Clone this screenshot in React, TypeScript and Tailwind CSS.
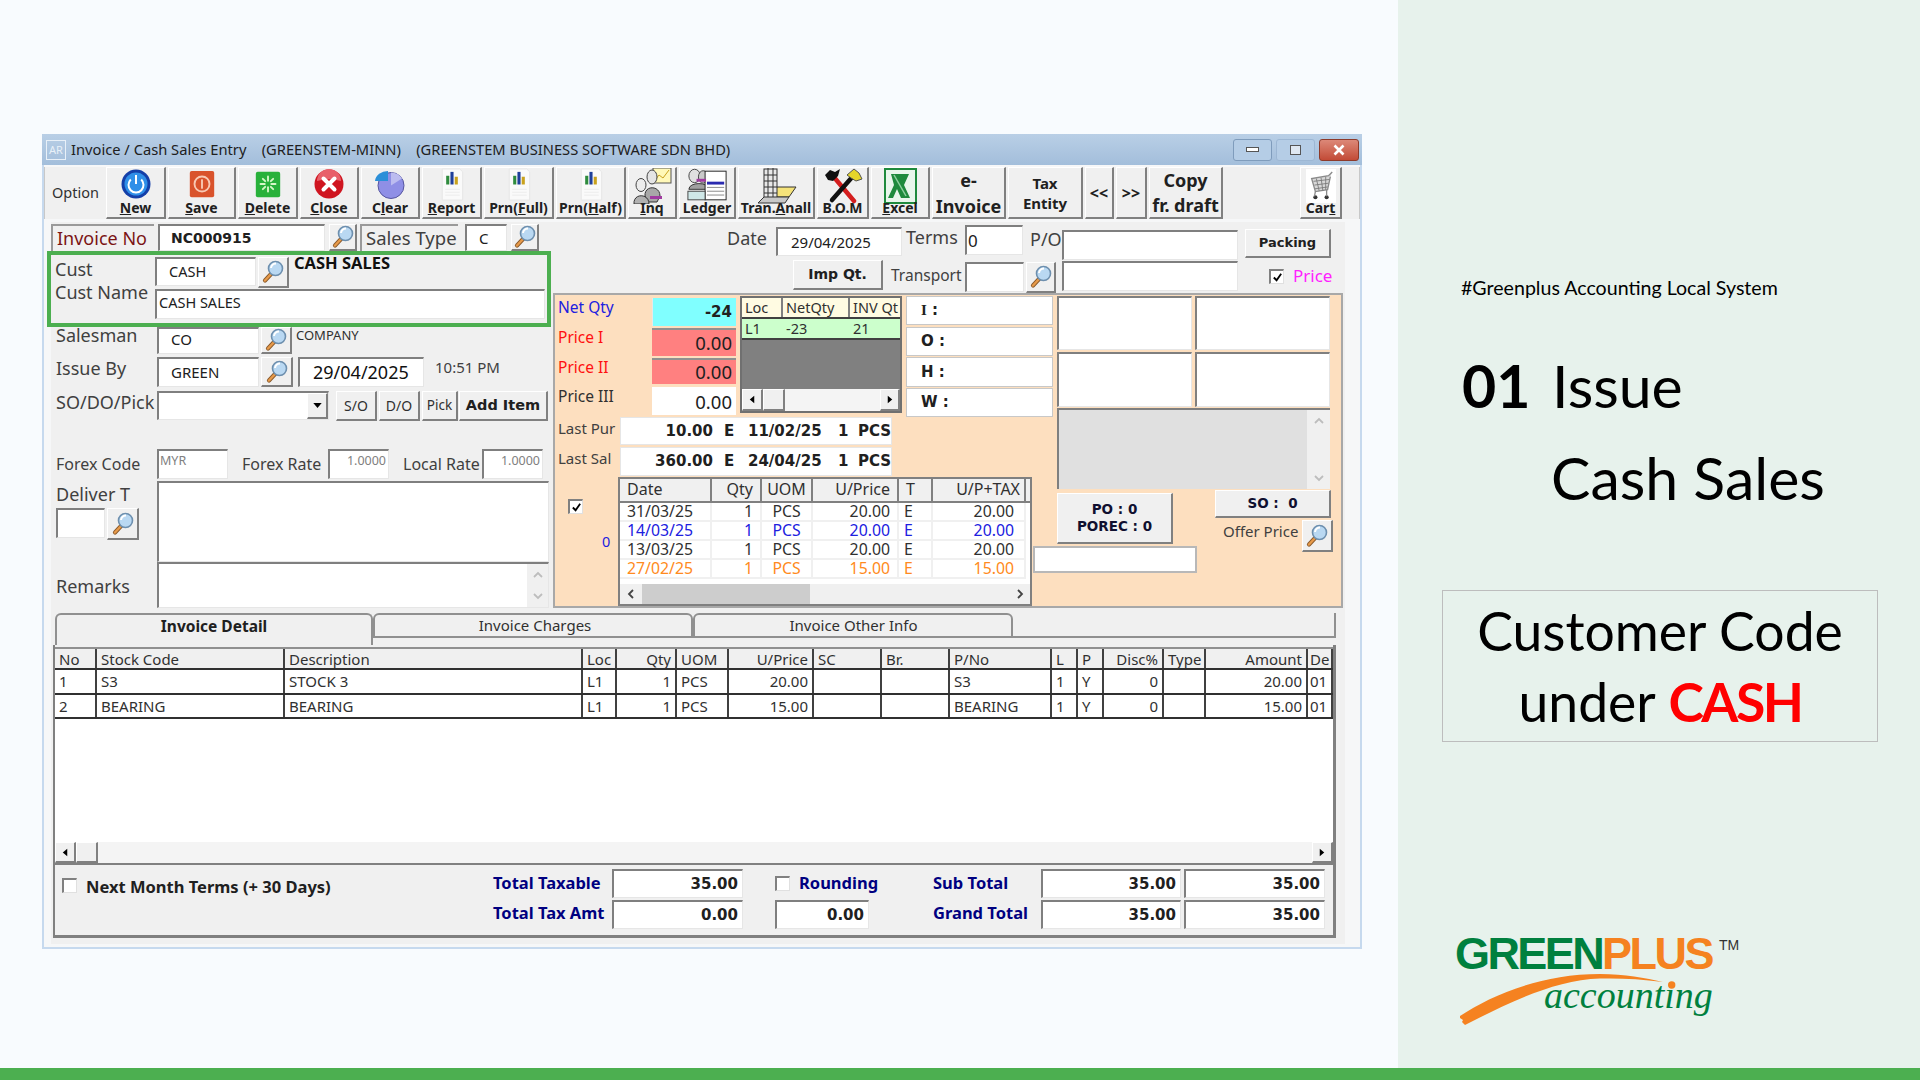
import React from "react";

const sunk = "bg-white border-t-2 border-l-2 border-t-[#7f7f7f] border-l-[#7f7f7f] border-r border-b border-r-[#e6e6e6] border-b-[#e6e6e6]";
const raised = "bg-[#f0f0f0] border-t border-l border-t-white border-l-white border-r-2 border-b-2 border-r-[#808080] border-b-[#808080]";
const dv = "font-['DejaVu_Sans',sans-serif] font-bold";
const lbl = "text-[#404040] whitespace-nowrap";
const blueB = "text-[#000080] font-bold text-[16.5px] whitespace-nowrap";

function MagIcon() {
  return (
    <svg viewBox="0 0 24 24" className="w-[24px] h-[24px]">
      <path d="M10.5 13.5 L4 20.5" stroke="#8a5a2b" strokeWidth="4.2" strokeLinecap="round" />
      <path d="M10.5 13.5 L4 20.5" stroke="#e79a4a" strokeWidth="2.4" strokeLinecap="round" />
      <circle cx="14.5" cy="8.5" r="7" fill="#b9d8f2" stroke="#6d8fae" strokeWidth="1.6" />
      <path d="M10 8 A5 5 0 0 1 15 3.6" fill="none" stroke="#ffffff" strokeWidth="2" />
    </svg>
  );
}

function Mag({ className }: { className: string }) {
  return (
    <div className={`${raised} ${className} flex items-center justify-center shrink-0`}>
      <MagIcon />
    </div>
  );
}

const icons: Record<string, React.ReactNode> = {
  new: (
    <svg viewBox="0 0 32 32" className="w-[32px] h-[32px]">
      <circle cx="16" cy="16" r="14.5" fill="#143fa8" />
      <circle cx="16" cy="16" r="11.5" fill="#2f8fe8" />
      <path d="M10.8 11.5 A7.5 7.5 0 1 0 21.2 11.5" fill="none" stroke="#fff" strokeWidth="2" />
      <path d="M16 7 V16" stroke="#fff" strokeWidth="2" />
    </svg>
  ),
  save: (
    <svg viewBox="0 0 32 32" className="w-[30px] h-[32px]">
      <rect x="3" y="2" width="26" height="28" rx="2" fill="#d9532c" />
      <circle cx="16" cy="16" r="8" fill="none" stroke="#f8c9b4" strokeWidth="2" />
      <rect x="15" y="11" width="2" height="10" fill="#f8c9b4" />
    </svg>
  ),
  delete: (
    <svg viewBox="0 0 32 32" className="w-[30px] h-[32px]">
      <rect x="3" y="3" width="26" height="27" rx="2" fill="#28b13a" />
      <g stroke="#d8f7c8" strokeWidth="2" strokeLinecap="round">
        <path d="M16 8 V12.5" /><path d="M16 19.5 V24" /><path d="M8 16 H12.5" /><path d="M19.5 16 H24" />
        <path d="M10.5 10.5 L13 13" /><path d="M19 19 L21.5 21.5" /><path d="M21.5 10.5 L19 13" /><path d="M13 19 L10.5 21.5" />
      </g>
    </svg>
  ),
  close: (
    <svg viewBox="0 0 32 32" className="w-[32px] h-[32px]">
      <circle cx="16" cy="16" r="14.5" fill="#cf1520" />
      <path d="M4 13 A12 12 0 0 1 28 13 A20 8 0 0 0 4 13" fill="#e8606a" />
      <path d="M10.5 10.5 L21.5 21.5 M21.5 10.5 L10.5 21.5" stroke="#fff" strokeWidth="4" strokeLinecap="round" />
    </svg>
  ),
  clear: (
    <svg viewBox="0 0 32 32" className="w-[32px] h-[32px]">
      <circle cx="17" cy="17.5" r="13" fill="#8f8fe6" stroke="#55559f" strokeWidth="1" />
      <path d="M17 17.5 L17 4.5 A13 13 0 0 1 28 10.5 Z" fill="#bcbcf0" />
      <path d="M14 13 L1 13 A13 11 0 0 1 14 3 Z" fill="#2b8fd8" />
    </svg>
  ),
  chart: (
    <svg viewBox="0 0 28 34" className="w-[28px] h-[33px]">
      <path d="M4 1 H22 L25 4 V33 H4 Z" fill="#fafafa" stroke="#e6e6e6" />
      <rect x="8" y="8" width="3.2" height="9" fill="#2e8b3d" />
      <rect x="12.4" y="4" width="3.2" height="13" fill="#1f3f9a" />
      <rect x="16.8" y="9" width="3.2" height="8" fill="#c9a21e" />
      <path d="M7 22 H22 M7 25 H22 M7 28 H22" stroke="#ececec" />
    </svg>
  ),
  inq: (
    <svg viewBox="0 0 42 36" className="w-[42px] h-[36px]">
      <rect x="22" y="0" width="18" height="15" fill="#fff8b8" stroke="#555" />
      <path d="M24 12 L28 7 L32 10 L38 2" stroke="#c9a21e" fill="none" />
      <ellipse cx="21" cy="9" rx="5" ry="7" fill="#e4e4e4" stroke="#444" />
      <path d="M14 28 C13 17 29 17 29 28 L26 34 H17 Z" fill="#a8a8a8" stroke="#333" />
      <ellipse cx="10" cy="17" rx="5" ry="6.5" fill="#ececec" stroke="#444" />
      <path d="M3 36 C2 25 18 25 18 36 Z" fill="#b0b0b0" stroke="#333" />
      <rect x="19" y="28" width="12" height="3" fill="#a03ca0" />
    </svg>
  ),
  ledger: (
    <svg viewBox="0 0 44 36" className="w-[42px] h-[35px]">
      <ellipse cx="9" cy="8" rx="6" ry="7" fill="#e0e0e0" stroke="#444" />
      <ellipse cx="18" cy="9" rx="5" ry="6.5" fill="#cacaca" stroke="#444" />
      <path d="M3 22 C3 14 24 14 24 22 Z" fill="#a0a0a0" stroke="#333" />
      <rect x="20" y="3" width="22" height="30" fill="#fff" stroke="#222" />
      <rect x="22" y="14" width="18" height="3" fill="#2a2ab0" />
      <path d="M22 20 H40 M22 24 H40 M22 28 H40" stroke="#888" />
      <rect x="2" y="24" width="18" height="9" fill="#cfe8e8" stroke="#444" />
      <rect x="11" y="11" width="10" height="3" fill="#a03ca0" />
    </svg>
  ),
  tran: (
    <svg viewBox="0 0 42 36" className="w-[42px] h-[36px]">
      <path d="M22 19 H41 L34 29 H16 Z" fill="#f5e37a" stroke="#333" />
      <rect x="9" y="1" width="13" height="29" fill="#e8e8e8" stroke="#333" />
      <path d="M13 0 V30 M18 0 V30 M9 7 H22 M9 13 H22 M9 19 H22 M9 25 H22" stroke="#333" />
      <path d="M3 35 H30 L34 29 H9 Z" fill="#c8c8c8" stroke="#333" />
    </svg>
  ),
  bom: (
    <svg viewBox="0 0 40 36" className="w-[40px] h-[36px]">
      <path d="M10 8 L31 33" stroke="#d41e1e" strokeWidth="4.5" strokeLinecap="round" />
      <path d="M31 7 L9 32" stroke="#111" strokeWidth="4.5" strokeLinecap="round" />
      <path d="M2 7 L7 2 L12 4 L17 1 L15 8 L10 13 L5 12 Z" fill="#111" />
      <path d="M24 7 L31 1 L36 5 L39 11 L33 13 L28 10 Z" fill="#e6d52a" stroke="#555" />
    </svg>
  ),
  excel: (
    <svg viewBox="0 0 36 36" className="w-[36px] h-[36px]">
      <rect x="3" y="1" width="31" height="34" fill="#e9f6ec" stroke="#1f8a3d" strokeWidth="2" />
      <path d="M9 6 H27 L22 17 L28 30 H19 L15 21 L11 30 H6 L12 17 Z" fill="#1f8a3d" />
      <path d="M12 7 L24 28" stroke="#8fd0a0" strokeWidth="1.5" />
    </svg>
  ),
  cart: (
    <svg viewBox="0 0 32 36" className="w-[30px] h-[36px]">
      <rect x="0" y="0" width="32" height="36" fill="#fff" />
      <path d="M28 3 L24 7 L6 10 L10 24 L23 22 L26 8" fill="#d7d7d7" stroke="#8a8a8a" strokeWidth="1.4" />
      <path d="M8 13 L25 11 M9 17 L24 15 M9.5 21 L23 19 M11 10 L14 23 M16 9 L18 23 M21 8 L21 22" stroke="#777" strokeWidth="0.9" />
      <circle cx="10" cy="30" r="2.2" fill="#333" />
      <circle cx="22" cy="30" r="2.2" fill="#333" />
      <path d="M10 24 L9 29 M22 22 L22 29" stroke="#8a8a8a" strokeWidth="1.4" />
    </svg>
  ),
};

function U({ children }: { children: React.ReactNode }) {
  return <span className="underline">{children}</span>;
}

function ToolBtn({ w, icon, children }: { w: string; icon: string; children: React.ReactNode }) {
  return (
    <div className={`${raised} ${w} h-[52px] shrink-0 flex flex-col items-center justify-between overflow-hidden pb-[2px]`}>
      <div className="h-[31px] flex items-start justify-center">{icons[icon]}</div>
      <div className="text-[14px] leading-[17px] font-bold text-[#202020] whitespace-nowrap">{children}</div>
    </div>
  );
}

function TextBtn({ w, cls, children }: { w: string; cls: string; children: React.ReactNode }) {
  return (
    <div className={`${raised} ${w} h-[52px] shrink-0 flex items-center justify-center text-center font-bold text-[#202020] ${cls}`}>
      <div>{children}</div>
    </div>
  );
}

function Tri({ dir }: { dir: "l" | "r" }) {
  return (
    <svg viewBox="0 0 8 10" className="w-[6px] h-[9px]">
      <polygon points={dir === "l" ? "7,0 1,5 7,10" : "1,0 7,5 1,10"} fill="#000" />
    </svg>
  );
}

function Chev({ dir }: { dir: "u" | "d" | "l" | "r" }) {
  const d = { u: "M2 8 L6 4 L10 8", d: "M2 4 L6 8 L10 4", l: "M8 2 L4 6 L8 10", r: "M4 2 L8 6 L4 10" }[dir];
  const c = dir === "u" || dir === "d" ? "#bdbdbd" : "#444";
  return (
    <svg viewBox="0 0 12 12" className="w-[12px] h-[12px]">
      <path d={d} fill="none" stroke={c} strokeWidth="1.8" />
    </svg>
  );
}

function Check({ on }: { on?: boolean }) {
  return (
    <div className="w-[15px] h-[15px] shrink-0 bg-white border-t-2 border-l-2 border-t-[#808080] border-l-[#808080] border-r border-b border-r-[#e0e0e0] border-b-[#e0e0e0] flex items-center justify-center">
      {on && (
        <svg viewBox="0 0 12 12" className="w-[11px] h-[11px]">
          <path d="M2 6 L5 9 L10 2" fill="none" stroke="#000" strokeWidth="2" />
        </svg>
      )}
    </div>
  );
}

const detailCols = "grid grid-cols-[42px_188px_298px_34px_60px_52px_85px_68px_68px_102px_26px_26px_60px_42px_102px_25px]";
const detailHead: [string, boolean?][] = [["No"], ["Stock Code"], ["Description"], ["Loc"], ["Qty", true], ["UOM"], ["U/Price", true], ["SC"], ["Br."], ["P/No"], ["L"], ["P"], ["Disc%", true], ["Type"], ["Amount", true], ["De"]];
const detailRows = [
  ["1", "S3", "STOCK 3", "L1", "1", "PCS", "20.00", "", "", "S3", "1", "Y", "0", "", "20.00", "01"],
  ["2", "BEARING", "BEARING", "L1", "1", "PCS", "15.00", "", "", "BEARING", "1", "Y", "0", "", "15.00", "01"],
];

const priceCols = "grid grid-cols-[92px_50px_51px_86px_34px_93px_4px]";
const priceRows: [string, string][] = [
  ["31/03/25", "text-[#303030]"],
  ["14/03/25", "text-[#2020e0]"],
  ["13/03/25", "text-[#303030]"],
  ["27/02/25", "text-[#ff8a20]"],
];

function PriceRow({ date, color, price, tax }: { date: string; color: string; price: string; tax: string }) {
  const cell = "border-r-2 border-b-2 border-r-[#f0f0f0] border-b-[#f0f0f0] h-[19px] flex items-center";
  return (
    <div className={`${priceCols} text-[15.8px] leading-[19px] ${color}`}>
      <div className={`${cell} pl-[7px]`}>{date}</div>
      <div className={`${cell} justify-end pr-[7px]`}>1</div>
      <div className={`${cell} justify-center`}>PCS</div>
      <div className={`${cell} justify-end pr-[7px]`}>{price}</div>
      <div className={`${cell} pl-[5px]`}>E</div>
      <div className={`${cell} justify-end pr-[10px]`}>{tax}</div>
      <div />
    </div>
  );
}

function LastRow({ label, amt, date }: { label: string; amt: string; date: string }) {
  return (
    <div className="flex h-full">
      <div className={`w-[65px] pl-[3px] pt-[1px] text-[15px] leading-[20px] ${lbl}`}>{label}</div>
      <div className={`w-[272px] bg-white border border-[#e6e6e6] grid grid-cols-[92px_35px_90px_20px_auto] items-center text-[15px] ${dv} text-[#202020] h-full`}>
        <div className="text-right">{amt}</div>
        <div className="pl-[11px]">E</div>
        <div>{date}</div>
        <div>1</div>
        <div>PCS</div>
      </div>
    </div>
  );
}

function Money({ w, children }: { w: string; children: React.ReactNode }) {
  return <div className={`${sunk} ${w} h-[29px] flex items-center justify-end pr-[4px] ${dv} text-[15px] text-[#202020]`}>{children}</div>;
}

function Logo() {
  return (
    <svg viewBox="0 0 300 110" className="w-[300px] h-[110px] ml-[52px]">
      <text x="5" y="39" fontFamily="Liberation Sans" fontWeight="700" fontSize="45" letterSpacing="-2.6" fill="#00803e">GREEN</text>
      <text x="152" y="39" fontFamily="Liberation Sans" fontWeight="700" fontSize="45" letterSpacing="-2.5" fill="#f58220">PLUS</text>
      <text x="269" y="20" fontFamily="Liberation Sans" fontSize="14" fill="#333">TM</text>
      <path d="M10 86 C40 66 90 44 150 44 C175 44 195 48 213 52 C190 49 170 48 150 48.5 C105 50 60 72 15 95 L12 92 L13 90 L10 88 Z" fill="#f58220" />
      <text x="94" y="78" fontFamily="Liberation Serif" fontStyle="italic" fontSize="38" fill="#00803e">accounting</text>
      <circle cx="221.7" cy="55" r="3.7" fill="#f58220" />
    </svg>
  );
}

export default function App() {
  return (
    <div className="w-[1920px] h-[1080px] overflow-hidden flex flex-col font-['Noto_Sans',sans-serif] bg-[#f8fbfe]">
      <div className="flex h-[1068px]">
        {/* Left: application window */}
        <div className="w-[1398px] pl-[42px] pt-[134px]">
          <div className="w-[1320px] h-[815px] bg-[#f6f7f8] border-2 border-t-0 border-[#c6d9ee] flex flex-col">
            {/* Title bar */}
            <div className="h-[31px] -mx-[2px] bg-linear-to-b from-[#b9cfe6] to-[#a3bedb] flex items-center pl-[4px] pr-[3px] shrink-0">
              <div className="w-[20px] h-[20px] border border-[#e8f0f8] text-[#e8f0f8] text-[11px] leading-[18px] text-center">AR</div>
              <div className="ml-[5px] text-[14.7px] text-[#202020] whitespace-pre">Invoice / Cash Sales Entry    (GREENSTEM-MINN)    (GREENSTEM BUSINESS SOFTWARE SDN BHD)</div>
              <div className="ml-auto flex items-center gap-[4px]">
                <div className="w-[39px] h-[22px] rounded-[3px] border border-[#7f9cbc] bg-[#b5cde6] flex items-center justify-center">
                  <div className="w-[13px] h-[5px] bg-white border border-[#555]" />
                </div>
                <div className="w-[39px] h-[22px] rounded-[3px] border border-[#9db7d4] bg-[#b5cde6] flex items-center justify-center">
                  <div className="w-[11px] h-[10px] bg-[#dfe8f2] border border-[#555]" />
                </div>
                <div className="w-[40px] h-[22px] rounded-[3px] border border-[#8d3a2a] bg-linear-to-b from-[#dc8878] to-[#c24a36] flex items-center justify-center">
                  <svg viewBox="0 0 14 12" className="w-[14px] h-[12px]">
                    <path d="M2.5 1.5 L11.5 10.5 M11.5 1.5 L2.5 10.5" stroke="#fff" strokeWidth="2.6" />
                  </svg>
                </div>
              </div>
            </div>

            {/* Toolbar */}
            <div className="mt-[2px] h-[52px] flex gap-[2px] bg-[#f0f0f0] border border-[#c8c8c8] border-y-0 shrink-0">
              <div className="w-[59px] h-[52px] pl-[7px] flex items-center text-[14.5px] text-[#303030]">Option</div>
              <ToolBtn w="w-[60px]" icon="new"><U>N</U>ew</ToolBtn>
              <ToolBtn w="w-[68px]" icon="save"><U>S</U>ave</ToolBtn>
              <ToolBtn w="w-[60px]" icon="delete"><U>D</U>elete</ToolBtn>
              <ToolBtn w="w-[59px]" icon="close"><U>C</U>lose</ToolBtn>
              <ToolBtn w="w-[59px]" icon="clear">C<U>l</U>ear</ToolBtn>
              <ToolBtn w="w-[60px]" icon="chart"><U>R</U>eport</ToolBtn>
              <ToolBtn w="w-[70px]" icon="chart">Prn(<U>F</U>ull)</ToolBtn>
              <ToolBtn w="w-[70px]" icon="chart">Prn(<U>H</U>alf)</ToolBtn>
              <ToolBtn w="w-[49px]" icon="inq"><U>I</U>nq</ToolBtn>
              <ToolBtn w="w-[57px]" icon="ledger">Ledger</ToolBtn>
              <ToolBtn w="w-[77px]" icon="tran">Tran.<U>A</U>nall</ToolBtn>
              <ToolBtn w="w-[52px]" icon="bom">B.O.M</ToolBtn>
              <ToolBtn w="w-[59px]" icon="excel"><U>E</U>xcel</ToolBtn>
              <TextBtn w="w-[74px]" cls="text-[18px] leading-[26px]">e-<br />Invoice</TextBtn>
              <TextBtn w="w-[75px]" cls="text-[15px] leading-[20px]">Tax<br />Entity</TextBtn>
              <TextBtn w="w-[29px]" cls="text-[16px]">&lt;&lt;</TextBtn>
              <TextBtn w="w-[31px]" cls="text-[16px]">&gt;&gt;</TextBtn>
              <TextBtn w="w-[74px]" cls="text-[18px] leading-[25px]">Copy<br />fr. draft</TextBtn>
              <div className="ml-auto mr-[17px]">
                <ToolBtn w="w-[42px]" icon="cart">Car<U>t</U></ToolBtn>
              </div>
            </div>

            {/* Form body */}
            <div className="mt-[3px] ml-[7px] w-[1294px] h-[722px] bg-[#f0f0f0] flex flex-col">
              <div className="flex h-[386px] shrink-0">
                {/* Left form column */}
                <div className="w-[502px] shrink-0">
                  <div className="mt-[2px] h-[27px] flex">
                    <div className="w-[103px] h-[27px] border-t-2 border-l-2 border-[#9a9a9a] pl-[4px] text-[18px] leading-[24px] text-[#7b1414] whitespace-nowrap">Invoice No</div>
                    <div className={`${sunk} ml-[4px] w-[167px] flex items-center pl-[11px] ${dv} text-[14px] text-[#202020]`}>NC000915</div>
                    <Mag className="ml-[4px] w-[28px] h-[27px]" />
                    <div className={`ml-[3px] w-[98px] h-[27px] border-t-2 border-l-2 border-[#9a9a9a] pl-[4px] text-[18.5px] leading-[24px] ${lbl}`}>Sales Type</div>
                    <div className={`${sunk} ml-[7px] w-[42px] flex items-center pl-[12px] text-[15px] text-[#202020]`}>C</div>
                    <Mag className="ml-[4px] w-[28px] h-[27px]" />
                  </div>

                  {/* Highlighted customer group */}
                  <div className="-ml-[4px] w-[504px] h-[76px] border-4 border-[#4caf50] flex">
                    <div className={`w-[104px] pl-[4px] pt-[3px] text-[18px] leading-[23px] ${lbl}`}>
                      <div>Cust</div>
                      <div>Cust Name</div>
                    </div>
                    <div className="pt-[2px]">
                      <div className="flex h-[29px]">
                        <div className={`${sunk} w-[101px] flex items-center pl-[12px] text-[14.5px] text-[#202020]`}>CASH</div>
                        <Mag className="ml-[2px] w-[31px] h-[31px]" />
                        <div className="ml-[5px] text-[16.5px] leading-[12px] font-bold text-[#101010] whitespace-nowrap">CASH SALES</div>
                      </div>
                      <div className={`${sunk} mt-[3px] w-[390px] h-[30px] flex items-center pl-[2px] pb-[3px] text-[14.5px] text-[#202020]`}>CASH SALES</div>
                    </div>
                  </div>

                  <div className="h-[27px] flex pl-[5px]">
                    <div className={`w-[101px] text-[18px] leading-[17px] ${lbl}`}>Salesman</div>
                    <div className={`${sunk} w-[102px] flex items-center pl-[12px] pb-[3px] text-[15px] text-[#202020]`}>CO</div>
                    <Mag className="ml-[2px] w-[31px] h-[27px]" />
                    <div className="ml-[4px] text-[13px] leading-[16px] text-[#303030]">COMPANY</div>
                  </div>

                  <div className="mt-[3px] h-[30px] flex pl-[5px]">
                    <div className={`w-[101px] text-[18px] leading-[22px] ${lbl}`}>Issue By</div>
                    <div className={`${sunk} w-[102px] flex items-center pl-[12px] pb-[1px] text-[15px] text-[#202020]`}>GREEN</div>
                    <Mag className="ml-[2px] w-[32px] h-[30px]" />
                    <div className={`${sunk} ml-[5px] w-[126px] flex items-center pl-[13px] text-[18px] text-[#101010]`}>29/04/2025</div>
                    <div className="ml-[11px] text-[15px] leading-[20px] text-[#404040]">10:51 PM</div>
                  </div>

                  <div className="mt-[4px] h-[30px] flex pl-[5px]">
                    <div className={`w-[101px] text-[18px] leading-[22px] ${lbl}`}>SO/DO/Pick</div>
                    <div className={`${sunk} w-[172px] h-[29px] flex justify-end`}>
                      <div className={`${raised} w-[21px] h-full flex items-center justify-center`}>
                        <svg viewBox="0 0 10 6" className="w-[9px] h-[5px]"><polygon points="0,0 10,0 5,6" fill="#000" /></svg>
                      </div>
                    </div>
                    <div className={`${raised} ml-[7px] w-[41px] flex items-center justify-center text-[14px] text-[#303030]`}>S/O</div>
                    <div className={`${raised} ml-[2px] w-[41px] flex items-center justify-center text-[14px] text-[#303030]`}>D/O</div>
                    <div className={`${raised} ml-[2px] w-[36px] flex items-center justify-center text-[13.5px] text-[#303030]`}>Pick</div>
                    <div className={`${raised} ml-[1px] w-[89px] flex items-center justify-center ${dv} text-[14.5px] text-[#202020] whitespace-nowrap`}>Add Item</div>
                  </div>

                  <div className="mt-[28px] h-[30px] flex pl-[5px]">
                    <div className={`w-[101px] pt-[4px] text-[16px] leading-[22px] ${lbl}`}>Forex Code</div>
                    <div className={`${sunk} w-[71px] pl-[1px] text-[12.5px] leading-[20px] text-[#808080]`}>MYR</div>
                    <div className={`ml-[14px] w-[86px] pt-[4px] text-[16px] leading-[22px] ${lbl}`}>Forex Rate</div>
                    <div className={`${sunk} w-[61px] pr-[2px] text-right text-[12.5px] leading-[20px] text-[#808080]`}>1.0000</div>
                    <div className={`ml-[14px] w-[79px] pt-[4px] text-[16px] leading-[22px] ${lbl}`}>Local Rate</div>
                    <div className={`${sunk} w-[61px] pr-[2px] text-right text-[12.5px] leading-[20px] text-[#808080]`}>1.0000</div>
                  </div>

                  <div className="mt-[2px] h-[81px] flex pl-[5px]">
                    <div className="w-[101px]">
                      <div className={`h-[27px] text-[18px] leading-[26px] ${lbl}`}>Deliver T</div>
                      <div className="flex">
                        <div className={`${sunk} w-[49px] h-[30px]`} />
                        <Mag className="ml-[2px] w-[32px] h-[32px]" />
                      </div>
                    </div>
                    <div className={`${sunk} w-[392px]`} />
                  </div>

                  <div className="h-[46px] flex pl-[5px]">
                    <div className={`w-[101px] pt-[11px] text-[18px] leading-[26px] ${lbl}`}>Remarks</div>
                    <div className={`${sunk} w-[392px] flex justify-end`}>
                      <div className="w-[21px] h-full bg-[#f0f0f0] flex flex-col items-center justify-between py-[5px]">
                        <Chev dir="u" />
                        <Chev dir="d" />
                      </div>
                    </div>
                  </div>
                </div>

                {/* Right column */}
                <div className="w-[790px] shrink-0">
                  <div className="h-[71px] pt-[3px]">
                    <div className="h-[35px] flex items-start">
                      <div className={`ml-[174px] w-[49px] pt-[1px] text-[18px] leading-[24px] ${lbl}`}>Date</div>
                      <div className={`${sunk} mt-[2px] w-[126px] h-[29px] flex items-center pl-[13px] text-[15px] text-[#202020]`}>29/04/2025</div>
                      <div className={`ml-[4px] w-[59px] text-[18px] leading-[24px] ${lbl}`}>Terms</div>
                      <div className={`${sunk} w-[58px] h-[30px] flex items-center pl-[1px] text-[17px] text-[#202020]`}>0</div>
                      <div className={`ml-[7px] w-[32px] pt-[2px] text-[18px] leading-[24px] ${lbl}`}>P/O</div>
                      <div className={`${sunk} mt-[5px] w-[176px] h-[30px]`} />
                      <div className={`${raised} ml-[7px] mt-[4px] w-[86px] h-[29px] flex items-center justify-center ${dv} text-[13px] text-[#202020]`}>Packing</div>
                    </div>
                    <div className="h-[33px] flex items-start">
                      <div className={`${raised} ml-[240px] w-[90px] h-[30px] flex items-center justify-center ${dv} text-[14px] text-[#202020]`}>Imp Qt.</div>
                      <div className={`ml-[8px] w-[74px] pt-[4px] text-[15.5px] leading-[22px] ${lbl}`}>Transport</div>
                      <div className={`${sunk} mt-[2px] w-[59px] h-[30px]`} />
                      <Mag className="ml-[2px] mt-[2px] w-[30px] h-[31px]" />
                      <div className={`${sunk} ml-[6px] mt-[1px] w-[176px] h-[30px]`} />
                      <div className="ml-[31px] mt-[9px]"><Check on /></div>
                      <div className="ml-[9px] mt-[3px] text-[17px] leading-[26px] text-[#ff20ff]">Price</div>
                    </div>
                  </div>

                  {/* Peach stock panel */}
                  <div className="w-[790px] h-[315px] bg-[#fddfbf] border-2 border-[#a8a8a8] flex">
                    <div className="w-[502px] shrink-0">
                      <div className="h-[122px] flex">
                        <div className="w-[181px] pt-[3px] shrink-0">
                          <div className="flex h-[28px]">
                            <div className="w-[97px] pl-[3px] text-[15.5px] leading-[18px] text-[#2020e0]">Net Qty</div>
                            <div className={`w-[84px] bg-[#80ffff] border-l border-[#e8e8e8] flex items-center justify-end pr-[4px] ${dv} text-[15px] text-[#202020]`}>-24</div>
                          </div>
                          <div className="flex h-[28px] mt-[2px]">
                            <div className="w-[97px] pl-[3px] text-[15.5px] leading-[18px] text-[#ff1010]">Price I</div>
                            <div className="w-[84px] bg-[#ff8080] border-t-2 border-[#909090] border-l-0 flex items-center justify-end pr-[4px] text-[18.5px] text-[#202020]">0.00</div>
                          </div>
                          <div className="flex h-[26px] mt-[2px]">
                            <div className="w-[97px] pl-[3px] text-[15.5px] leading-[18px] text-[#ff1010]">Price II</div>
                            <div className="w-[84px] bg-[#ff8080] border-t-2 border-[#909090] flex items-center justify-end pr-[4px] text-[18.5px] text-[#202020]">0.00</div>
                          </div>
                          <div className="flex h-[28px] mt-[3px]">
                            <div className="w-[97px] pl-[3px] text-[15.5px] leading-[19px] text-[#303030]">Price III</div>
                            <div className="w-[84px] bg-white flex items-center justify-end pr-[4px] pt-[1px] text-[18.5px] text-[#202020]">0.00</div>
                          </div>
                        </div>

                        <div className="ml-[4px] mt-[1px] w-[162px] h-[117px] bg-[#808080] border-2 border-[#707070] flex flex-col shrink-0">
                          <div className="h-[21px] grid grid-cols-[41px_67px_50px] bg-[#fffbe2] border-b-2 border-[#404040] text-[14.5px] leading-[19px] text-[#303030] overflow-hidden">
                            <div className="pl-[3px] border-r-2 border-[#808080]">Loc</div>
                            <div className="pl-[3px] border-r-2 border-[#808080]">NetQty</div>
                            <div className="pl-[3px] whitespace-nowrap overflow-hidden">INV Qt</div>
                          </div>
                          <div className="h-[21px] grid grid-cols-[41px_67px_50px] bg-[#ccffcc] border-b-2 border-[#404040] text-[14.5px] leading-[19px] text-[#303030]">
                            <div className="pl-[3px]">L1</div>
                            <div className="pl-[3px]">-23</div>
                            <div className="pl-[3px]">21</div>
                          </div>
                          <div className="flex-1" />
                          <div className="h-[22px] bg-[#f4f4f4] flex">
                            <div className={`${raised} w-[21px] flex items-center justify-center`}><Tri dir="l" /></div>
                            <div className={`${raised} w-[22px]`} />
                            <div className="flex-1" />
                            <div className={`${raised} w-[20px] flex items-center justify-center`}><Tri dir="r" /></div>
                          </div>
                        </div>

                        <div className={`ml-[4px] mt-[1px] w-[147px] shrink-0 ${dv} text-[15px] text-[#202020]`}>
                          <div className="h-[29px] bg-white border border-[#c8c8c8] flex items-center pl-[14px]"><span className="font-['Liberation_Serif',serif]">I</span>&nbsp;:</div>
                          <div className="h-[29px] mt-[2px] bg-white border border-[#c8c8c8] flex items-center pl-[14px]">O :</div>
                          <div className="h-[30px] mt-[1px] bg-white border border-[#c8c8c8] flex items-center pl-[14px]">H :</div>
                          <div className="h-[29px] mt-[1px] bg-white border border-[#c8c8c8] flex items-center pl-[14px]">W :</div>
                        </div>
                      </div>

                      <div className="h-[28px]"><LastRow label="Last Pur" amt="10.00" date="11/02/25" /></div>
                      <div className="h-[29px] mt-[2px]"><LastRow label="Last Sal" amt="360.00" date="24/04/25" /></div>

                      <div className="mt-[1px] flex h-[129px]">
                        <div className="w-[63px] shrink-0">
                          <div className="mt-[22px] ml-[13px]"><Check on /></div>
                          <div className="mt-[18px] ml-[47px] text-[14.5px] leading-[18px] text-[#2020e0]">0</div>
                        </div>
                        <div className="w-[414px] h-[129px] border-2 border-[#808080] bg-white flex flex-col shrink-0">
                          <div className={`${priceCols} h-[24px] bg-[#f0f0f0] border-b-2 border-[#808080] text-[16px] leading-[21px] text-[#303030]`}>
                            <div className="pl-[7px] border-r-2 border-[#808080]">Date</div>
                            <div className="text-right pr-[7px] border-r-2 border-[#808080]">Qty</div>
                            <div className="text-center border-r-2 border-[#808080]">UOM</div>
                            <div className="text-right pr-[7px] border-r-2 border-[#808080]">U/Price</div>
                            <div className="pl-[7px] border-r-2 border-[#808080]">T</div>
                            <div className="text-right pr-[4px] border-r-2 border-[#808080]">U/P+TAX</div>
                            <div />
                          </div>
                          {priceRows.map(([d, c], i) => (
                            <PriceRow key={d} date={d} color={c} price={i === 3 ? "15.00" : "20.00"} tax={i === 3 ? "15.00" : "20.00"} />
                          ))}
                          <div className="flex-1" />
                          <div className="h-[20px] bg-[#f0f0f0] flex items-center justify-between">
                            <div className="flex items-center h-full flex-1">
                              <div className="w-[22px] flex justify-center"><Chev dir="l" /></div>
                              <div className="w-[168px] h-full bg-[#cdcdcd]" />
                            </div>
                            <div className="w-[20px] flex justify-center"><Chev dir="r" /></div>
                          </div>
                        </div>
                      </div>
                    </div>

                    {/* Right blocks inside peach */}
                    <div className="w-[284px] pt-[1px] shrink-0">
                      <div className="flex">
                        <div className={`${sunk} w-[135px] h-[54px]`} />
                        <div className={`${sunk} ml-[3px] w-[135px] h-[54px]`} />
                      </div>
                      <div className="flex mt-[2px]">
                        <div className={`${sunk} w-[135px] h-[55px]`} />
                        <div className={`${sunk} ml-[3px] w-[135px] h-[55px]`} />
                      </div>
                      <div className="mt-[1px] w-[273px] h-[81px] bg-[#e0e0e0] border-t-2 border-l-2 border-[#7f7f7f] flex justify-end">
                        <div className="w-[23px] h-full bg-[#f0f0f0] flex flex-col items-center justify-between py-[5px]">
                          <Chev dir="u" />
                          <Chev dir="d" />
                        </div>
                      </div>
                      <div className="flex">
                        <div className="w-[116px] pt-[4px]">
                          <div className={`${raised} w-[116px] h-[51px] flex flex-col items-center justify-center ${dv} text-[13.5px] leading-[17px] text-[#101030]`}>
                            <div>PO : 0</div>
                            <div>POREC : 0</div>
                          </div>
                          <div className="mt-[2px] -ml-[24px] w-[164px] h-[27px] bg-white border-2 border-[#b8b8b8]" />
                        </div>
                        <div className="ml-[42px] pt-[1px]">
                          <div className={`${raised} w-[116px] h-[28px] flex items-center justify-center ${dv} text-[13.5px] text-[#101030]`}>SO :&nbsp; 0</div>
                          <div className="mt-[2px] flex">
                            <div className={`ml-[8px] w-[79px] text-[15px] leading-[22px] ${lbl}`}>Offer Price</div>
                            <Mag className="w-[31px] h-[32px]" />
                          </div>
                        </div>
                      </div>
                    </div>
                  </div>
                </div>
              </div>

              {/* Tabs */}
              <div className="mt-[5px] ml-[4px] w-[1281px] h-[32px] flex items-start shrink-0">
                <div className="w-[318px] h-[32px] rounded-t-[6px] border-t-2 border-x-2 border-[#909090] text-center font-bold text-[15.5px] leading-[22px] text-[#202020]">Invoice Detail</div>
                <div className="w-[320px] h-[25px] pl-[4px] rounded-t-[6px] border-2 border-[#909090] text-center text-[15px] leading-[21px] text-[#303030]">Invoice Charges</div>
                <div className="w-[320px] h-[25px] pl-[1px] rounded-t-[6px] border-2 border-[#909090] text-center text-[15px] leading-[21px] text-[#303030]">Invoice Other Info</div>
                <div className="flex-1 h-[25px] border-b-2 border-r-2 border-[#909090]" />
              </div>

              {/* Detail panel */}
              <div className="ml-[2px] w-[1283px] h-[293px] border-l-2 border-r-[3px] border-b-[3px] border-[#808080] flex flex-col shrink-0">
                <div className="mt-[2px] flex flex-col h-[195px] bg-white shrink-0">
                  <div className={`${detailCols} h-[23px] bg-[#f0f0f0] border-y-2 border-t-[#909090] border-b-[#303030] text-[15px] leading-[20px] text-[#303030]`}>
                    {detailHead.map(([h, right], i) => (
                      <div key={h} className={`border-r-2 border-[#404040] ${i === 15 ? "px-[2px]" : "px-[4px]"} whitespace-nowrap overflow-hidden ${right ? "text-right" : ""}`}>{h}</div>
                    ))}
                  </div>
                  {detailRows.map((r) => (
                    <div key={r[0]} className={`${detailCols} h-[24.5px] border-b-2 border-[#303030] text-[15px] leading-[23px] text-[#303030]`}>
                      {r.map((c, i) => (
                        <div key={i} className={`border-r-2 border-[#404040] ${i === 15 ? "px-[2px]" : "px-[4px]"} whitespace-nowrap overflow-hidden ${detailHead[i][1] ? "text-right" : ""}`}>{c}</div>
                      ))}
                    </div>
                  ))}
                  <div className="flex-1" />
                </div>
                <div className="h-[21px] bg-[#f4f4f4] flex shrink-0">
                  <div className={`${raised} w-[21px] flex items-center justify-center`}><Tri dir="l" /></div>
                  <div className={`${raised} w-[22px]`} />
                  <div className="flex-1" />
                  <div className={`${raised} w-[21px] flex items-center justify-center`}><Tri dir="r" /></div>
                </div>
                <div className="flex-1 flex border-t-2 border-[#808080]">
                  <div className="w-[438px] pl-[7px] pt-[13px] flex items-start shrink-0">
                    <Check />
                    <div className="ml-[9px] font-bold text-[16.5px] leading-[18px] text-[#202020] whitespace-nowrap">Next Month Terms (+ 30 Days)</div>
                  </div>
                  <div className="w-[119px] shrink-0">
                    <div className={`mt-[4px] h-[29px] flex items-center ${blueB}`}>Total Taxable</div>
                    <div className={`mt-[3px] h-[24px] flex items-center ${blueB}`}>Total Tax Amt</div>
                  </div>
                  <div className="w-[131px] shrink-0 pt-[4px]">
                    <Money w="w-[131px]">35.00</Money>
                    <div className="mt-[2px]"><Money w="w-[131px]">0.00</Money></div>
                  </div>
                  <div className="ml-[32px] w-[94px] shrink-0 pt-[11px]">
                    <div className="flex items-center h-[15px]">
                      <Check />
                      <div className={`ml-[9px] ${blueB}`}>Rounding</div>
                    </div>
                    <div className="mt-[9px]"><Money w="w-[94px]">0.00</Money></div>
                  </div>
                  <div className="ml-[64px] w-[108px] shrink-0">
                    <div className={`mt-[4px] h-[29px] flex items-center ${blueB}`}>Sub Total</div>
                    <div className={`mt-[3px] h-[24px] flex items-center ${blueB}`}>Grand Total</div>
                  </div>
                  <div className="w-[140px] shrink-0 pt-[4px]">
                    <Money w="w-[140px]">35.00</Money>
                    <div className="mt-[2px]"><Money w="w-[140px]">35.00</Money></div>
                  </div>
                  <div className="ml-[3px] w-[141px] shrink-0 pt-[4px]">
                    <Money w="w-[141px]">35.00</Money>
                    <div className="mt-[2px]"><Money w="w-[141px]">35.00</Money></div>
                  </div>
                </div>
              </div>
            </div>
          </div>
        </div>

        {/* Right: caption panel */}
        <div className="w-[522px] h-[1068px] bg-[#e7f2ec] font-['Lato',sans-serif] text-black flex flex-col">
          <div className="mt-[276px] ml-[63px] text-[19.6px] leading-[24px] whitespace-nowrap">#Greenplus Accounting Local System</div>
          <div className="mt-[40px] ml-[64px] flex h-[92px] items-center text-[59px] leading-[92px]">
            <span className="w-[90px] font-bold">01</span>
            <span>Issue</span>
          </div>
          <div className="ml-[153px] h-[92px] text-[59px] leading-[92px] whitespace-nowrap">Cash Sales</div>
          <div className="mt-[66px] ml-[44px] w-[436px] h-[152px] border-[1.5px] border-[#bdbdbd] flex flex-col items-center justify-center text-[53.5px] leading-[71px]">
            <div>Customer Code</div>
            <div>under <span className="font-bold tracking-[-2.5px] text-[#ff0000]">CASH</span></div>
          </div>
          <div className="mt-[188px]"><Logo /></div>
        </div>
      </div>
      <div className="h-[12px] bg-[#4caf50]" />
    </div>
  );
}
